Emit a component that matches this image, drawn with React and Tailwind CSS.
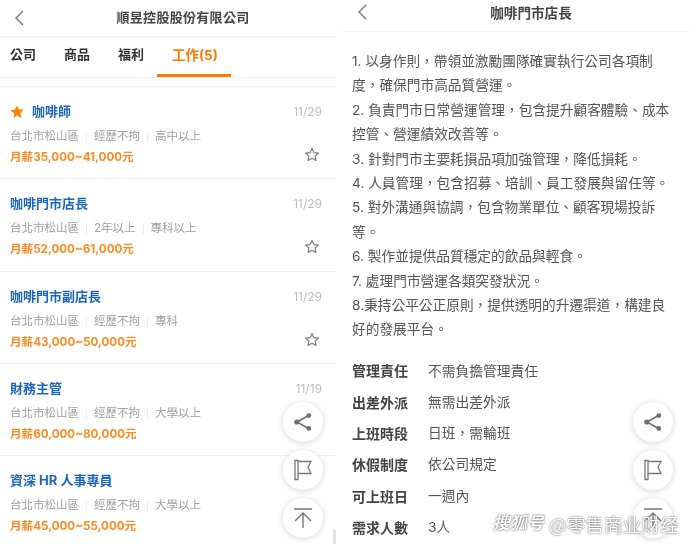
import React from "react";

const jobs = [
  { t: "咖啡師", d: "11/29", m: ["台北市松山區", "經歷不拘", "高中以上"], s: "月薪35,000~41,000元", pin: true, star: true, h: "h-[92px]" },
  { t: "咖啡門市店長", d: "11/29", m: ["台北市松山區", "2年以上", "專科以上"], s: "月薪52,000~61,000元", star: true, h: "h-[93px]" },
  { t: "咖啡門市副店長", d: "11/29", m: ["台北市松山區", "經歷不拘", "專科"], s: "月薪43,000~50,000元", star: true, h: "h-[92px]" },
  { t: "財務主管", d: "11/19", m: ["台北市松山區", "經歷不拘", "大學以上"], s: "月薪60,000~80,000元", h: "h-[92px]" },
  { t: "資深 HR 人事專員", d: "", m: ["台北市松山區", "經歷不拘", "大學以上"], s: "月薪45,000~55,000元", h: "h-[89px]" },
];

const desc = [
  "1. 以身作則，帶領並激勵團隊確實執行公司各項制",
  "度，確保門市高品質營運。",
  "2. 負責門市日常營運管理，包含提升顧客體驗、成本",
  "控管、營運績效改善等。",
  "3. 針對門市主要耗損品項加強管理，降低損耗。",
  "4. 人員管理，包含招募、培訓、員工發展與留任等。",
  "5. 對外溝通與協調，包含物業單位、顧客現場投訴",
  "等。",
  "6. 製作並提供品質穩定的飲品與輕食。",
  "7. 處理門市營運各類突發狀況。",
  "8.秉持公平公正原則，提供透明的升遷渠道，構建良",
  "好的發展平台。",
];

const fields = [
  ["管理責任", "不需負擔管理責任"],
  ["出差外派", "無需出差外派"],
  ["上班時段", "日班，需輪班"],
  ["休假制度", "依公司規定"],
  ["可上班日", "一週內"],
  ["需求人數", "3人"],
];

function Back() {
  return (
    <svg width="12" height="18" viewBox="0 0 12 18" fill="none" stroke="#777" strokeWidth="1.4">
      <path d="M10 2 3 9l7 7" />
    </svg>
  );
}

function Fab({ kind, cls }) {
  return (
    <div className={`absolute flex h-10 w-10 items-center justify-center rounded-full bg-white shadow-[0_1px_6px_rgba(0,0,0,0.18)] ${cls}`}>
      {kind === "share" && (
        <svg width="22" height="22" viewBox="0 0 22 22" fill="#6f6f6f" stroke="#6f6f6f" strokeWidth="1.6">
          <path d="M16.5 4.5 5 11l11.5 6.5" fill="none" />
          <circle cx="16.8" cy="4.6" r="2.4" stroke="none" />
          <circle cx="4.8" cy="11" r="2.6" stroke="none" />
          <circle cx="16.8" cy="17.4" r="2.4" stroke="none" />
        </svg>
      )}
      {kind === "flag" && (
        <svg width="22" height="24" viewBox="0 0 22 24" fill="none" stroke="#777" strokeWidth="1.3">
          <path d="M3 2.5h3v19H3zM6 3.5h13l-3 6 3 6H6" />
        </svg>
      )}
      {kind === "top" && (
        <svg width="22" height="24" viewBox="0 0 22 24" fill="none" stroke="#777" strokeWidth="1.4">
          <path d="M2 3h18M11 22V8M3 15l8-8 8 8" />
        </svg>
      )}
    </div>
  );
}

function Star() {
  return (
    <svg width="16" height="16" viewBox="0 0 16 16" fill="none" stroke="#777" strokeWidth="1.1" strokeLinejoin="round">
      <path d="M8 1.5l1.9 4.1 4.5.5-3.3 3 .9 4.4L8 11.3l-4 2.2.9-4.4-3.3-3 4.5-.5z" />
    </svg>
  );
}

export default function App() {
  return (
    <div className="flex h-[544px] w-[690px] overflow-hidden bg-white font-['Inter','Noto_Sans_CJK_TC',sans-serif] [filter:blur(0.35px)]">
      <div className="relative h-full w-[336px] shrink-0 overflow-hidden">
        <div className="relative flex h-[37px] items-center justify-center border-b border-[#f1f1f1] pl-[30px]">
          <span className="absolute left-[13px] top-[9px] flex"><Back /></span>
          <span className="text-[13px] font-bold tracking-[0.3px] text-[#444]">順昱控股股份有限公司</span>
        </div>
        <div className="flex h-[41px] items-center border-b border-[#f0f0f0] pb-[4px] pl-[10px] text-[13px] font-bold text-[#333]">
          <span className="w-[54px]">公司</span>
          <span className="w-[54px]">商品</span>
          <span className="w-[54px]">福利</span>
          <span className="relative text-[13.5px] text-[#ff7800]">
            工作(5)
            <span className="absolute left-[-15px] top-[29px] h-[3px] w-[74px] bg-[#ff7800]" />
          </span>
        </div>
        <div className="h-[9px] border-b border-[#f0f0f0]" />
        {jobs.map((j) => (
          <div key={j.t} className={`relative border-b border-[#f0f0f0] px-[10px] pt-[16px] last:border-b-0 ${j.h}`}>
            <div className="flex h-[18px] items-center justify-between">
              <div className="flex items-center gap-[8px] text-[13px] font-bold text-[#1b66c0]">
                {j.pin && (
                  <svg width="14" height="14" viewBox="0 0 14 14" fill="#ff8000">
                    <path d="M7 .5l1.8 4h4.7l-3 3.2.9 5.3L7 10.3 4 13l.3-4.4L.3 5.2l4.4-.5z" />
                  </svg>
                )}
                <span>{j.t}</span>
              </div>
              <span className="pr-[4px] text-[12px] text-[#bdbdbd]">{j.d}</span>
            </div>
            <div className="mt-[8px] flex h-[16px] items-center text-[11.5px] text-[#a0a0a0]">
              {j.m.map((x, i) => (
                <React.Fragment key={x}>
                  {i > 0 && <span className="mx-[7px] h-[10px] w-px bg-[#ececec]" />}
                  <span>{x}</span>
                </React.Fragment>
              ))}
            </div>
            <div className="mt-[3px] text-[11.6px] font-bold leading-[18px] text-[#ff8a1f]">{j.s}</div>
            {j.star && <span className="absolute right-[16px] top-[60px] flex"><Star /></span>}
          </div>
        ))}
        <Fab kind="share" cls="left-[283px] top-[402px]" />
        <Fab kind="flag" cls="left-[283px] top-[450px]" />
        <Fab kind="top" cls="left-[283px] top-[498px]" />
        <span className="absolute left-[333px] top-[530px] h-[14px] w-[3px] bg-[#e2e2e2]" />
      </div>

      <div className="h-full w-[6px] shrink-0 bg-white" />

      <div className="relative h-full flex-1 overflow-hidden">
        <div className="relative flex h-[32px] items-center justify-center border-b border-[#f2f2f2] pb-[4px] pl-[30px]">
          <span className="absolute left-[14px] top-[3px] flex"><Back /></span>
          <span className="text-[13.6px] font-bold text-[#444]">咖啡門市店長</span>
        </div>
        <div className="px-[10px] pt-[17px]">
          {desc.map((l) => (
            <div key={l} className="h-[24.4px] whitespace-nowrap text-[13.7px] leading-[24.4px] text-[#555]">{l}</div>
          ))}
          <div className="mt-[13.5px]">
            {fields.map(([a, b]) => (
              <div key={a} className="flex h-[31.3px] items-center text-[13.75px] text-[#555]">
                <span className="w-[76px] text-[14px] font-bold text-[#444]">{a}</span>
                <span>{b}</span>
              </div>
            ))}
          </div>
        </div>
        <Fab kind="share" cls="left-[291px] top-[402px]" />
        <Fab kind="flag" cls="left-[291px] top-[450px]" />
        <Fab kind="top" cls="left-[291px] top-[498px]" />
        <div className="absolute left-[151px] top-[510px] flex items-center gap-[5px] whitespace-nowrap text-white [text-shadow:0_0_2px_rgba(0,0,0,0.8)]">
          <span className="text-[17px] font-bold italic">搜狐号</span>
          <span className="text-[18.7px] [font-family:'Noto_Sans_CJK_SC',sans-serif]">@零售商业财经</span>
        </div>
      </div>
    </div>
  );
}
